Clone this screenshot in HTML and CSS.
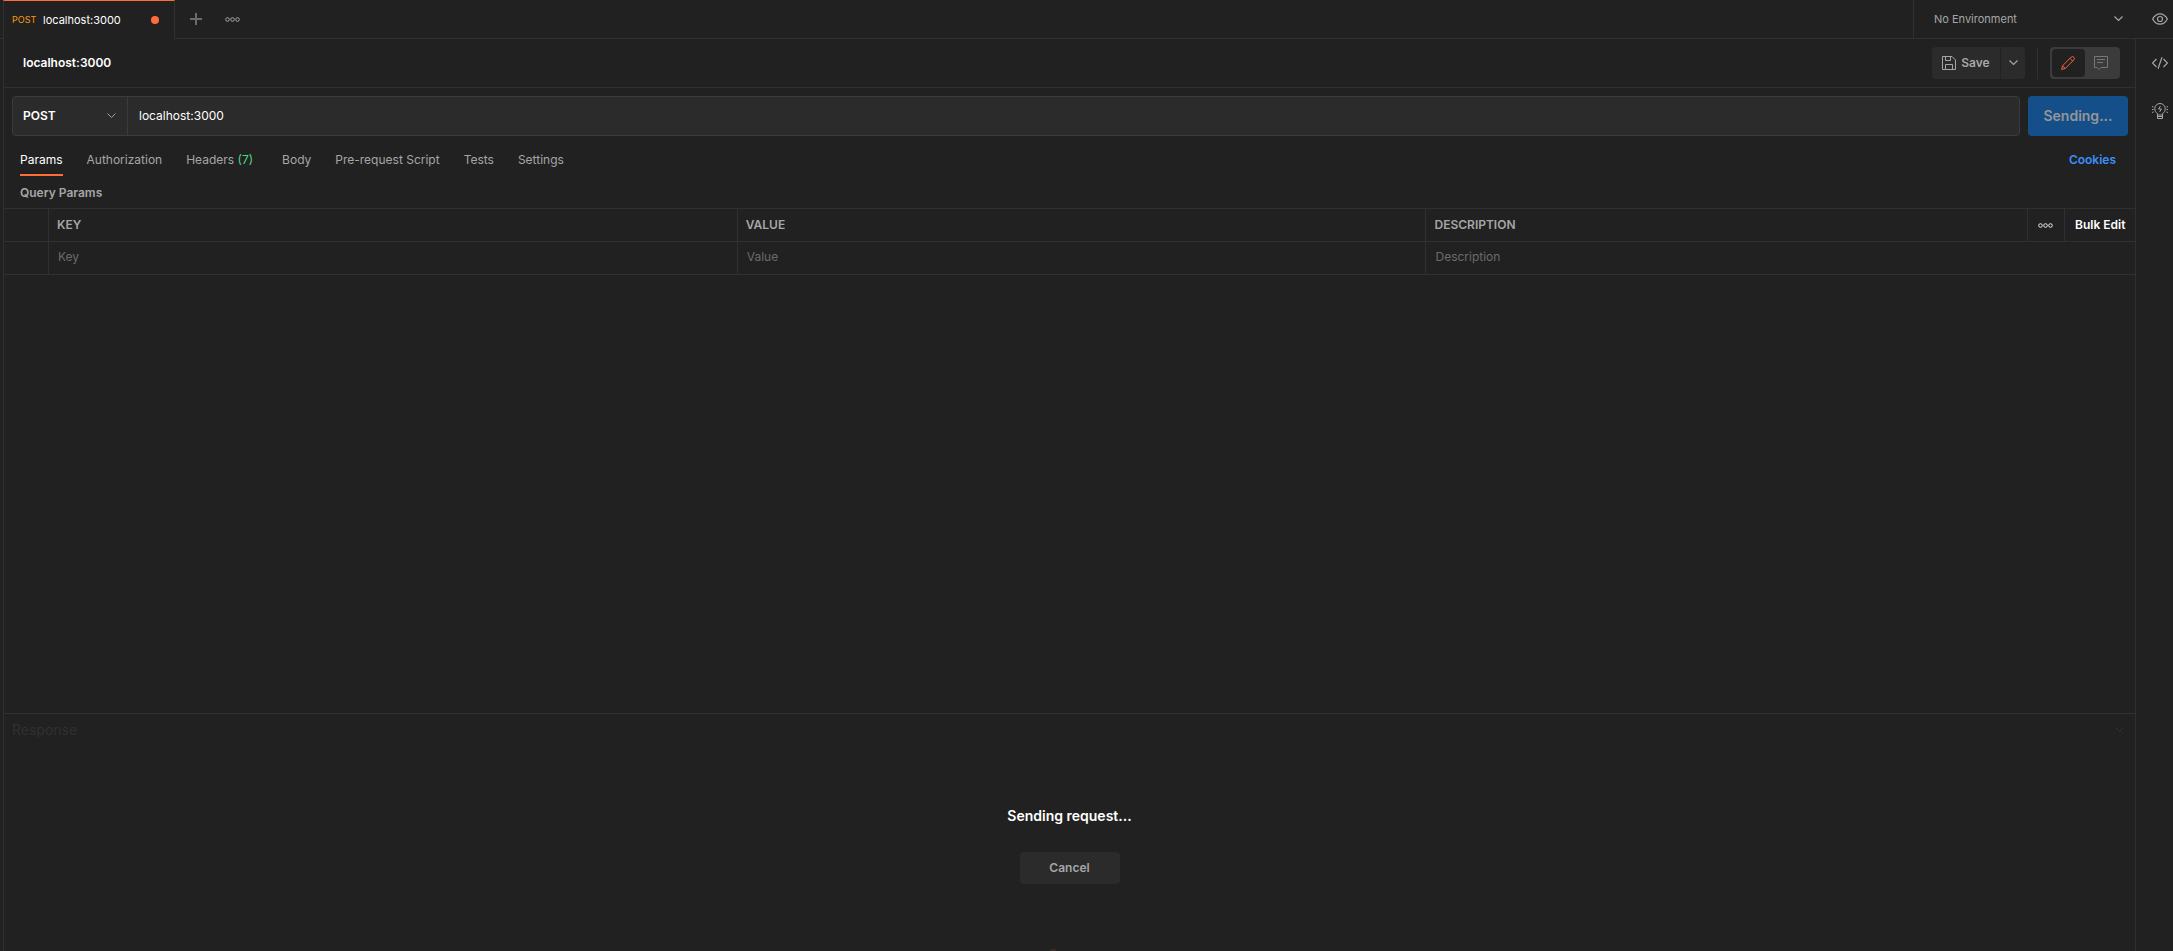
FILE: index.html
```html
<!DOCTYPE html>
<html lang="en">
<head>
<meta charset="utf-8">
<title>localhost:3000</title>
<link rel="stylesheet" href="styles.css">
</head>
<body>
<div class="app">
  <header class="topbar">
    <div class="tab">
      <span class="tab-method">POST</span>
      <span class="tab-name">localhost:3000</span>
      <span class="tab-dot"></span>
    </div>
    <div class="tab-actions">
      <button class="icon-button" aria-label="New tab">
        <svg width="12" height="12" viewBox="0 0 12 12" fill="none" stroke="#6b6b6b" stroke-width="2"><path d="M6 0v12M0 6h12"/></svg>
      </button>
      <button class="icon-button" aria-label="Tab options">
        <svg width="15" height="5" viewBox="0 0 15 5" fill="none" stroke="#a6a6a6"><circle cx="2.500" cy="2.500" r="1.800"/><circle cx="7.500" cy="2.500" r="1.800"/><circle cx="12.500" cy="2.500" r="1.800"/></svg>
      </button>
    </div>
    <div class="environment">
      <select class="environment-select" aria-label="Environment"><option>No Environment</option></select>
      <svg class="chevron" width="9" height="6" viewBox="0 0 9 6" fill="none" stroke="#a6a6a6" stroke-width="1.200"><path d="M.5.5l4 4 4-4"/></svg>
    </div>
    <button class="icon-button eye" aria-label="Environment quick look">
      <svg width="16" height="12" viewBox="0 0 16 12" fill="none" stroke="#a6a6a6" stroke-width="1.200"><path d="M.6 6C2.500 2.600 5 .8 8 .8S13.500 2.600 15.400 6C13.500 9.400 11 11.200 8 11.200S2.500 9.400.6 6z"/><circle cx="8" cy="6" r="2.500"/></svg>
    </button>
  </header>

  <div class="workspace">
    <main class="main">
      <div class="titlebar">
        <h1 class="title">localhost:3000</h1>
        <div class="save-group">
          <button class="save">
            <svg width="14" height="14" viewBox="0 0 14 14" fill="none" stroke="#a6a6a6"><path d="M.5.5h9.500l3.500 3.500v9.500H.5zM3.500.5v4h5v-4M3.500 13.500v-5h7v5"/></svg>
            Save
          </button>
          <button class="save-more" aria-label="Save options">
            <svg width="9" height="6" viewBox="0 0 9 6" fill="none" stroke="#a6a6a6" stroke-width="1.200"><path d="M.5.5l4 4 4-4"/></svg>
          </button>
        </div>
        <div class="mode-group">
          <div class="mode">
            <button class="mode-button active" aria-label="Build">
              <svg width="14" height="14" viewBox="0 0 14 14" fill="none" stroke="#f0673a" stroke-linejoin="round"><path d="M.6 13.400l.9-3.600L10.300 1q1.300-1 2.500.2t.2 2.500L4.200 12.500zM1.500 9.800l2.700 2.700M9 2.300L11.700 5"/></svg>
            </button>
            <button class="mode-button" aria-label="Comments">
              <svg width="14" height="14" viewBox="0 0 14 14" fill="none" stroke="#777"><path d="M.5.5h13v11H7l-2 2-2-2H.5zM3 3.500h8M3 6.500h6"/></svg>
            </button>
          </div>
        </div>
      </div>

      <form class="request-line" onsubmit="return false">
        <div class="request-box">
          <div class="method">
            <select class="method-select" aria-label="Method"><option>POST</option></select>
            <svg class="chevron" width="9" height="6" viewBox="0 0 9 6" fill="none" stroke="#a0a0a0"><path d="M.5.5l4 4 4-4"/></svg>
          </div>
          <input class="url" type="text" aria-label="Request URL" value="localhost:3000">
        </div>
        <button class="send">Sending...</button>
      </form>

      <nav class="sections">
        <button class="section active">Params</button>
        <button class="section">Authorization</button>
        <button class="section">Headers <span class="count">(7)</span></button>
        <button class="section body-section">Body</button>
        <button class="section">Pre-request Script</button>
        <button class="section">Tests</button>
        <button class="section">Settings</button>
        <a class="cookies" href="#">Cookies</a>
      </nav>

      <h2 class="subheading">Query Params</h2>
      <table class="params">
        <colgroup><col class="col-check"><col class="col-key"><col class="col-value"><col><col class="col-more"><col class="col-bulk"></colgroup>
        <thead>
          <tr>
            <th></th><th>KEY</th><th>VALUE</th><th>DESCRIPTION</th>
            <th class="tool"><button class="icon-button" aria-label="Columns"><svg width="15" height="5" viewBox="0 0 15 5" fill="none" stroke="#e6e6e6"><circle cx="2.500" cy="2.500" r="1.800"/><circle cx="7.500" cy="2.500" r="1.800"/><circle cx="12.500" cy="2.500" r="1.800"/></svg></button></th>
            <th class="tool"><button class="bulk">Bulk Edit</button></th>
          </tr>
        </thead>
        <tbody>
          <tr>
            <td></td>
            <td><input class="cell" type="text" placeholder="Key" aria-label="Key"></td>
            <td><input class="cell" type="text" placeholder="Value" aria-label="Value"></td>
            <td colspan="3"><input class="cell" type="text" placeholder="Description" aria-label="Description"></td>
          </tr>
        </tbody>
      </table>

      <section class="response">
        <div class="response-head">
          <h2 class="response-title">Response</h2>
          <svg width="9" height="6" viewBox="0 0 9 6" fill="none" stroke="#333"><path d="M.5.5l4 4 4-4"/></svg>
        </div>
        <div class="sending">
          <p class="sending-text">Sending request...</p>
          <button class="cancel">Cancel</button>
        </div>
        <svg class="rocket" width="40" height="2" viewBox="0 0 40 2"><ellipse cx="3" cy="2" rx="3" ry="2" fill="#3b2d2d"/></svg>
      </section>
    </main>

    <aside class="rail">
      <button class="icon-button" aria-label="Code">
        <svg width="16" height="12" viewBox="0 0 16 12" fill="none" stroke="#a6a6a6" stroke-width="1.200"><path d="M4.500 2l-4 4 4 4M11.500 2l4 4-4 4M10 .3L6 11.700"/></svg>
      </button>
      <button class="icon-button" aria-label="Request info">
        <svg width="16" height="16" viewBox="0 0 16 16" fill="none" stroke="#a6a6a6"><path d="M5.500 12v-1.500C3.600 9.500 2.800 7.900 2.800 5.800 2.800 2.700 5 .5 8 .5s5.200 2.200 5.200 5.300c0 2.100-.8 3.700-2.700 4.700V12zM5.500 12v3.500h5V12M5.500 13.500h5M8.500 3L6.500 6h3l-2 3M0 3.500l1.500.5M0 6.500h1.500M0 9.500L1.500 9M16 3.500l-1.500.5M16 6.500h-1.500M16 9.500L14.500 9"/></svg>
      </button>
    </aside>
  </div>
</div>
</body>
</html>
```
FILE: styles.css
```css
* { box-sizing: border-box; }
body {
  margin: 0;
  background: #212121;
  color: #a6a6a6;
  font: 12px/16px Inter, "Liberation Sans", sans-serif;
}
button, input, select {
  margin: 0;
  padding: 0;
  border: 0;
  background: none;
  color: inherit;
  font: inherit;
  appearance: none;
  outline: none;
}
h1, h2, p { margin: 0; font-size: 12px; font-weight: 600; }
svg { display: block; flex: none; }
.app { display: flex; flex-direction: column; min-height: 100vh; }
.icon-button { display: flex; align-items: center; justify-content: center; }

.topbar { display: flex; height: 39px; padding-left: 3px; background: linear-gradient(#303030, #303030) bottom / 100% 1px no-repeat; }
.tab {
  display: flex;
  align-items: center;
  width: 172px;
  padding: 0 15px 0 8px;
  background: #212121;
  border: 1px solid #303030;
  border-top-color: #ff6c37;
  border-bottom: 0;
  font-size: 11px;
}
.tab-method { width: 31px; color: #f79a0e; font-size: 9px; }
.tab-name { color: #fff; }
.tab-dot { width: 8px; height: 8px; margin-left: auto; border-radius: 50%; background: #ff6c37; }
.tab-actions { display: flex; gap: 23px; padding: 0 0 1px 15px; }
.environment {
  display: flex;
  align-items: center;
  width: 222px;
  margin-left: auto;
  padding: 0 12px 1px 20px;
  border-left: 1px solid #303030;
  font-size: 11px;
}
.environment-select { flex: 1; }
.chevron { pointer-events: none; }
.eye { width: 38px; padding: 0 5px 1px 17px; }

.workspace { display: flex; flex: 1; }
.main { display: flex; flex-direction: column; flex: 1; min-width: 0; margin-left: 3px; border-left: 1px solid #303030; }
.rail { display: flex; flex-direction: column; align-items: center; gap: 34px; width: 38px; padding: 18px 5px 0 16px; border-left: 1px solid #303030; }

.titlebar { display: flex; align-items: center; height: 49px; padding: 0 15px 0 19px; border-bottom: 1px solid #303030; }
.title { flex: 1; color: #fff; }
.save-group { display: flex; gap: 1px; height: 32px; font-weight: 600; }
.save { display: flex; align-items: center; justify-content: center; gap: 5px; width: 68px; border-radius: 4px 0 0 4px; background: #2b2b2b; }
.save-more { display: flex; align-items: center; justify-content: center; width: 24px; border-radius: 0 4px 4px 0; background: #2b2b2b; }
.mode-group { margin-left: 12px; padding-left: 12px; border-left: 1px solid #303030; }
.mode { display: flex; width: 70px; height: 32px; padding: 2px 3px 2px 2px; border-radius: 4px; background: #3b3b3b; }
.mode-button { display: flex; flex: 1; align-items: center; justify-content: center; border-radius: 4px; }
.mode-button.active { background: #212121; }

.request-line { display: flex; gap: 8px; padding: 8px 7px 8px 8px; }
.request-box { display: flex; flex: 1; height: 40px; border: 1px solid #3b3b3b; border-radius: 4px; background: #2b2b2b; color: #fff; }
.method { display: flex; align-items: center; width: 115px; padding: 0 11px 0 10px; border-right: 1px solid #3b3b3b; }
.method-select { flex: 1; font-weight: 600; }
.url { flex: 1; min-width: 0; padding: 0 11px; }
.send { width: 100px; border-radius: 4px; background: #144f8a; color: #969696; font-size: 14px; font-weight: 600; }

.sections { display: flex; align-items: center; gap: 24px; padding: 0 19px 0 16px; }
.section { height: 32px; padding-top: 2px; border-bottom: 2px solid transparent; }
.section.active { border-color: #ff6c37; color: #fff; }
.body-section { margin-left: 5px; }
.count { color: #4fd683; }
.cookies { margin-left: auto; color: #3b8ffc; font-weight: 600; text-decoration: none; }
.subheading { padding: 9px 16px 7px; }

.params { width: 100%; border-spacing: 0; border-top: 1px solid #303030; table-layout: fixed; text-align: left; }
.col-check { width: 44px; }
.col-key, .col-value { width: 32.32%; }
.col-more { width: 37px; }
.col-bulk { width: 71px; }
.params th, .params td { height: 33px; padding: 0 0 0 8px; border-bottom: 1px solid #303030; border-left: 1px solid #303030; }
.params td { padding-bottom: 2px; }
.params th { font-weight: 600; }
.params th:first-child, .params td:first-child { border-left: 0; }
.params .tool { padding: 0 8px 0 10px; }
.bulk { color: #fff; font-weight: 600; white-space: nowrap; }
.cell { width: 100%; padding-left: 1px; }
.cell::placeholder { color: #6b6b6b; opacity: 1; }

.response { display: flex; flex-direction: column; min-height: 238px; margin-top: auto; border-top: 1px solid #303030; }
.response-head { display: flex; align-items: center; justify-content: space-between; padding: 8px 11px 8px 8px; }
.response-title { color: #303030; font-size: 14px; font-weight: 400; }
.sending { display: flex; flex-direction: column; align-items: center; gap: 28px; padding-top: 62px; }
.sending-text { color: #fff; font-size: 14px; }
.cancel { width: 100px; height: 32px; border-radius: 4px; background: #2b2b2b; font-weight: 600; }
.rocket { margin: auto auto 0; }
```
